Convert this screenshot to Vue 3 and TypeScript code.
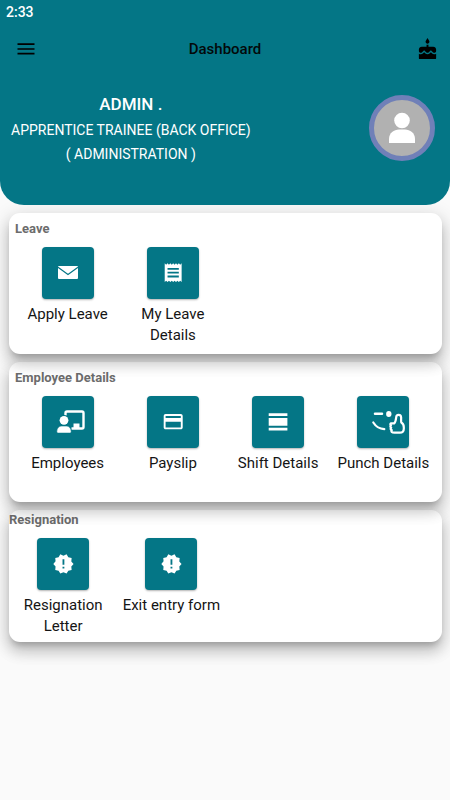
<script setup lang="ts">
type IconName = 'mail' | 'receipt' | 'trainer' | 'card' | 'shift' | 'punch' | 'alert'

interface Item {
  label: string
  icon: IconName
}

interface Section {
  id: string
  title: string
  flush?: boolean
  items: Item[]
}

const sections: Section[] = [
  {
    id: 'leave',
    title: 'Leave',
    items: [
      { label: 'Apply Leave', icon: 'mail' },
      { label: 'My Leave Details', icon: 'receipt' },
    ],
  },
  {
    id: 'employee',
    title: 'Employee Details',
    items: [
      { label: 'Employees', icon: 'trainer' },
      { label: 'Payslip', icon: 'card' },
      { label: 'Shift Details', icon: 'shift' },
      { label: 'Punch Details', icon: 'punch' },
    ],
  },
  {
    id: 'resignation',
    title: 'Resignation',
    flush: true,
    items: [
      { label: 'Resignation Letter', icon: 'alert' },
      { label: 'Exit entry form', icon: 'alert' },
    ],
  },
]
</script>

<template>
  <div class="page">
    <header class="hero">
      <div class="status">2:33</div>
      <nav class="bar">
        <button class="icon-button menu" type="button" aria-label="Menu">
          <svg viewBox="0 0 24 24" width="24" height="24">
            <path d="M3.500 7.200h17M3.500 12h17M3.500 16.700h17" fill="none" stroke="#000" stroke-width="1.700" />
          </svg>
        </button>
        <h1>Dashboard</h1>
        <button class="icon-button cake" type="button" aria-label="Birthdays">
          <svg viewBox="0 0 24 24" width="23" height="23">
            <path d="M12 6c1.11 0 2-.9 2-2 0-.38-.1-.73-.29-1.03L12 0l-1.71 2.97c-.19.3-.29.65-.29 1.03 0 1.1.9 2 2 2zm4.6 9.99l-1.07-1.07-1.08 1.07c-1.3 1.3-3.58 1.31-4.89 0l-1.07-1.07-1.09 1.07C6.75 16.64 5.88 17 4.96 17c-.73 0-1.4-.23-1.96-.61V21c0 .55.45 1 1 1h16c.55 0 1-.45 1-1v-4.61c-.56.38-1.23.61-1.96.61-.92 0-1.79-.36-2.44-1.01zM18 9h-5V7h-2v2H6c-1.66 0-3 1.34-3 3v1.54c0 1.08.88 1.96 1.96 1.96.52 0 1.02-.2 1.38-.57l2.14-2.13 2.13 2.13c.74.74 2.03.74 2.77 0l2.14-2.13 2.13 2.13c.37.37.86.57 1.38.57 1.08 0 1.96-.88 1.96-1.96V12C21 10.34 19.66 9 18 9z" />
          </svg>
        </button>
      </nav>
      <div class="profile">
        <div class="who">
          <h2>ADMIN .</h2>
          <p>APPRENTICE TRAINEE (BACK OFFICE)</p>
          <p>( ADMINISTRATION )</p>
        </div>
        <div class="avatar">
          <svg viewBox="0 0 56 56" width="56" height="56" aria-hidden="true">
            <circle cx="28" cy="20.500" r="7.800" fill="#fff" />
            <path d="M15 43v-4c0-6 5-9.500 10-9.500h6c5 0 10 3.500 10 9.500v4z" fill="#fff" />
          </svg>
        </div>
      </div>
    </header>

    <main class="sections">
      <section
        v-for="section in sections"
        :key="section.id"
        class="card"
        :class="[section.id, { flush: section.flush }]"
      >
        <h3>{{ section.title }}</h3>
        <div class="grid">
          <button v-for="item in section.items" :key="item.label" class="item" type="button">
            <span class="tile">
              <svg viewBox="0 0 52 52" width="52" height="52" aria-hidden="true">
                <g v-if="item.icon === 'mail'">
                  <rect x="16" y="19" width="20" height="13" rx="1" fill="#fff" />
                  <path d="M16 20.300l10 7.200 10-7.200" fill="none" stroke="#047686" stroke-width="1.200" />
                </g>
                <path
                  v-else-if="item.icon === 'receipt'"
                  transform="translate(14.900 14.400) scale(.94)"
                  fill="#fff"
                  d="M18 17H6v-2h12v2zm0-4H6v-2h12v2zm0-4H6V7h12v2zM3 22l1.500-1.500L6 22l1.500-1.500L9 22l1.500-1.500L12 22l1.500-1.500L15 22l1.500-1.500L18 22l1.500-1.500L21 22V2l-1.500 1.500L18 2l-1.500 1.500L15 2l-1.500 1.500L12 2l-1.500 1.500L9 2 7.500 3.500 6 2 4.500 3.500 3 2v20z"
                />
                <g v-else-if="item.icon === 'trainer'">
                  <path d="M23.500 19.500v-2.500a1.500 1.500 0 0 1 1.500-1.500h15a1.500 1.500 0 0 1 1.500 1.500v14a1.500 1.500 0 0 1-1.500 1.500H29.500" fill="none" stroke="#fff" stroke-width="2.400" />
                  <path d="M31.500 32v-4.500h6V32z" fill="#fff" />
                  <circle cx="22" cy="24.300" r="5.300" fill="#047686" />
                  <circle cx="22" cy="24.300" r="4.400" fill="#fff" />
                  <path d="M14.800 35.500c0-3.500 2.300-5.500 5-5.500h4.400c2.700 0 5 2 5 5.500 0 1-.7 1.600-1.500 1.600H16.300c-.8 0-1.500-.6-1.500-1.600z" fill="#fff" stroke="#047686" stroke-width=".6" />
                </g>
                <path
                  v-else-if="item.icon === 'card'"
                  transform="translate(14.800 14.300) scale(.95)"
                  fill="#fff"
                  d="M20 4H4c-1.110 0-1.990.890-1.990 2L2 18c0 1.110.890 2 2 2h16c1.110 0 2-.890 2-2V6c0-1.110-.890-2-2-2zm0 14H4v-6h16v6zm0-10H4V6h16v2z"
                />
                <path
                  v-else-if="item.icon === 'shift'"
                  fill="#fff"
                  d="M16.700 17.200h18.700V20H16.700zM16.700 22h18.700v7.800H16.700zM16.700 31.800h18.700v2.800H16.700z"
                />
                <g v-else-if="item.icon === 'punch'" fill="none" stroke="#fff" stroke-width="2.200" stroke-linecap="round" stroke-linejoin="round">
                  <path d="M18 17.700h7" stroke-width="2.500" />
                  <ellipse cx="31.800" cy="18" rx="2.700" ry="3" fill="#fff" stroke="none" />
                  <path d="M16.300 26.500c2.500 4 6 6.300 11 6.700" />
                  <path d="M34 27.300h3.200c1.500-1.300 1.700-3.500 2-6 .1-3.300 4.500-3.300 4.900-.2.200 1.900-.3 3.600.2 5.400 2 1 2.500 2.600 2.500 4.700v1.500c0 2.900-1.400 4-4 4h-5.300c-2.800 0-3.800-1-2.700-2.600-1.400-.5-1.500-1.600-.6-2.400-1.100-.6-1.100-1.700-.2-2.300-.9-.6-.9-1.800 0-2.100z" />
                </g>
                <path
                  v-else
                  transform="translate(15.400 14.900) scale(.92)"
                  fill="#fff"
                  d="M23 12l-2.440-2.780.340-3.680-3.610-.820-1.890-3.180L12 3 8.600 1.540 6.710 4.720l-3.610.810.340 3.680L1 12l2.440 2.780-.340 3.690 3.610.820 1.890 3.180L12 21l3.400 1.460 1.890-3.180 3.610-.820-.340-3.680L23 12zm-10 5h-2v-2h2v2zm0-4h-2V7h2v6z"
                />
              </svg>
            </span>
            <span class="label">{{ item.label }}</span>
          </button>
        </div>
      </section>
    </main>
  </div>
</template>

<style>
body {
  margin: 0;
  background: #fafafa;
}
</style>

<style scoped>
.page {
  min-height: 100vh;
  background: #fafafa;
  color: #151515;
  font-family: Roboto, "Liberation Sans", sans-serif;
}

h1,
h2,
h3,
p {
  margin: 0;
}

button {
  padding: 0;
  border: 0;
  background: none;
  color: inherit;
  font: inherit;
  cursor: pointer;
}

.hero {
  padding-bottom: 39px;
  border-radius: 0 0 24px 24px;
  background: #047686;
  color: #fff;
}

.status {
  padding: 0 6px;
  font-size: 14px;
  font-weight: 500;
  line-height: 24px;
}

.bar {
  display: grid;
  grid-template-columns: 1fr auto 1fr;
  align-items: center;
  height: 50px;
  padding: 0 11px;
}

.icon-button {
  display: flex;
  align-items: center;
  justify-content: center;
  width: 24px;
  height: 24px;
}

.menu {
  margin-left: 3px;
}

.cake {
  justify-self: end;
}

.bar h1 {
  color: #03090a;
  font-size: 15px;
  font-weight: 500;
  line-height: 20px;
  text-align: center;
}

.profile {
  display: flex;
  align-items: flex-start;
  justify-content: space-between;
  padding: 18px 15px 0 11px;
}

.who {
  text-align: center;
}

.who h2 {
  margin-bottom: 2px;
  font-size: 17px;
  font-weight: 500;
  line-height: 24px;
}

.who p {
  font-size: 14px;
  line-height: 24px;
}

.avatar {
  box-sizing: border-box;
  width: 66px;
  height: 66px;
  margin-top: 3px;
  border: 5px solid #7080b8;
  border-radius: 50%;
  background: #b1b1b1;
}

.avatar svg {
  display: block;
}

.sections {
  display: flex;
  flex-direction: column;
  gap: 8px;
  padding: 8px 8px 24px 9px;
}

.card {
  position: relative;
  padding: 6px 6px 7px;
  border-radius: 11px;
  background: #fff;
  box-shadow:
    0 6px 6px -3px rgba(0, 0, 0, 0.2),
    0 10px 14px 1px rgba(0, 0, 0, 0.14),
    0 4px 18px 3px rgba(0, 0, 0, 0.12);
}

/* Each card casts its shadow over the one that follows. */
.leave {
  z-index: 3;
  padding-bottom: 8px;
}

.employee {
  z-index: 2;
}

.flush {
  z-index: 1;
  padding: 0 0 5px;
}

.hero {
  position: relative;
  z-index: 4;
}

.card h3 {
  color: #6c6c6c;
  font-size: 13px;
  font-weight: 700;
  line-height: 20px;
}

.grid {
  display: grid;
  grid-template-columns: repeat(4, 1fr);
  padding-top: 8px;
}

.item {
  display: flex;
  flex-direction: column;
  align-items: center;
}

.tile {
  width: 52px;
  height: 52px;
  border-radius: 4px;
  background: #047686;
  box-shadow: 0 1px 2px rgba(0, 0, 0, 0.3);
}

.tile svg {
  display: block;
}

.label {
  min-height: 42px;
  margin-top: 5px;
  font-size: 15px;
  line-height: 21px;
  text-align: center;
}
</style>
